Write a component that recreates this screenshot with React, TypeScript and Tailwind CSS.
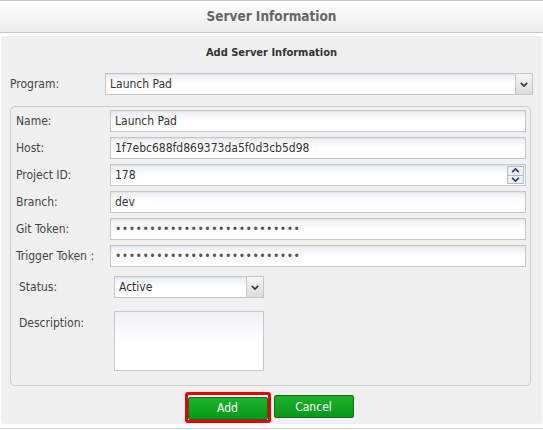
import React from "react";

const inputCls =
  "h-[22px] border border-[#c6c6c6] bg-gradient-to-b from-[#e9eef2] via-white to-white px-[4px] text-[12px] leading-[20px] text-[#333] shadow-[inset_0_1px_1px_rgba(0,0,0,0.04)]";

function Caret({ className }: { className?: string }) {
  return (
    <svg viewBox="0 0 10 6" className={className} aria-hidden="true">
      <path d="M1 1l4 4 4-4" fill="none" stroke="currentColor" strokeWidth="2" />
    </svg>
  );
}

function SelectBox({ value, className }: { value: string; className?: string }) {
  return (
    <div className={`relative flex items-center ${inputCls} ${className ?? ""}`}>
      <span>{value}</span>
      <span className="absolute right-0 top-0 flex h-full w-[17px] items-center justify-center border-l border-[#c6c6c6] bg-gradient-to-b from-[#f6f6f6] to-[#dcdcdc] text-[#333]">
        <Caret className="h-[5px] w-[8px]" />
      </span>
    </div>
  );
}

function Row({ label, children }: { label: string; children: React.ReactNode }) {
  return (
    <div className="flex h-[22px] items-center">
      <label className="w-[94px] shrink-0 text-[12px] text-[#444]">{label}</label>
      <div className="flex-1">{children}</div>
    </div>
  );
}

const dots = "•".repeat(27);

export default function App() {
  return (
    <div
      className="h-[430px] w-[543px] overflow-hidden bg-white text-[#444]"
      style={{ fontFamily: '"DejaVu Sans Condensed", "DejaVu Sans", Verdana, sans-serif' }}
    >
      <div className="flex h-[33px] items-center justify-center border-y border-[#c8c8c8] bg-gradient-to-b from-white to-[#ececec]">
        <h1 className="text-[13.5px] font-bold text-[#666]">Server Information</h1>
      </div>

      <div className="mx-[1px] mt-[3px] h-[388px] rounded-[3px] bg-[#f0f0f0] pt-[10px]">
        <h2 className="text-center text-[11px] font-bold leading-[14px] text-[#333]">
          Add Server Information
        </h2>

        <div className="mt-[13px] flex items-center pl-[9px] pr-[9px]">
          <label className="w-[95px] shrink-0 text-[12px] text-[#444]">Program:</label>
          <SelectBox value="Launch Pad" className="h-[21px] flex-1" />
        </div>

        <fieldset className="ml-[9px] mr-[11px] mt-[11px] h-[280px] rounded-[5px] border border-[#cdcdcd] pl-[5px] pr-[4px] pt-[3px]">
          <div className="flex flex-col gap-[5px]">
            <Row label="Name:">
              <div className={inputCls}>Launch Pad</div>
            </Row>
            <Row label="Host:">
              <div className={inputCls}>1f7ebc688fd869373da5f0d3cb5d98</div>
            </Row>
            <Row label="Project ID:">
              <div className={`relative ${inputCls}`}>
                178
                <span className="absolute right-[1px] top-[1px] flex h-[18px] w-[17px] flex-col border border-[#b8b8d0] bg-[#eef0f6] text-[#2d3a7c]">
                  <span className="flex flex-1 items-center justify-center border-b border-[#b8b8d0]">
                    <Caret className="h-[5px] w-[9px] rotate-180" />
                  </span>
                  <span className="flex flex-1 items-center justify-center">
                    <Caret className="h-[5px] w-[9px]" />
                  </span>
                </span>
              </div>
            </Row>
            <Row label="Branch:">
              <div className={inputCls}>dev</div>
            </Row>
            <Row label="Git Token:">
              <div className={`${inputCls} tracking-[0.5px] text-[#555]`}>{dots}</div>
            </Row>
            <Row label="Trigger Token :">
              <div className={`${inputCls} tracking-[0.5px] text-[#555]`}>{dots}</div>
            </Row>
          </div>

          <div className="mt-[9px] flex items-center pl-[3px]">
            <label className="w-[95px] shrink-0 text-[12px] text-[#444]">Status:</label>
            <SelectBox value="Active" className="w-[150px]" />
          </div>

          <div className="mt-[13px] flex items-start pl-[3px]">
            <label className="w-[95px] shrink-0 pt-[3px] text-[12px] text-[#444]">Description:</label>
            <div className="h-[60px] w-[150px] border border-[#c6c6d6] bg-gradient-to-b from-[#eef1f4] via-white to-white" />
          </div>
        </fieldset>

        <div className="mt-[6px] flex justify-center gap-[3px] pr-[5px]">
          <div className="rounded-[3px] border-[3px] border-[#e8000c] p-0">
            <button className="h-[23px] w-[80px] rounded-[2px] border border-[#0e6e17] bg-gradient-to-b from-[#1db22a] to-[#06981a] text-[12px] text-white">
              Add
            </button>
          </div>
          <button className="mt-[3px] h-[23px] w-[80px] rounded-[2px] border border-[#0e6e17] bg-gradient-to-b from-[#1db22a] to-[#06981a] text-[12px] text-white">
            Cancel
          </button>
        </div>
      </div>
      <div className="mt-[4px] border-t border-[#cfcfcf]" />
    </div>
  );
}
